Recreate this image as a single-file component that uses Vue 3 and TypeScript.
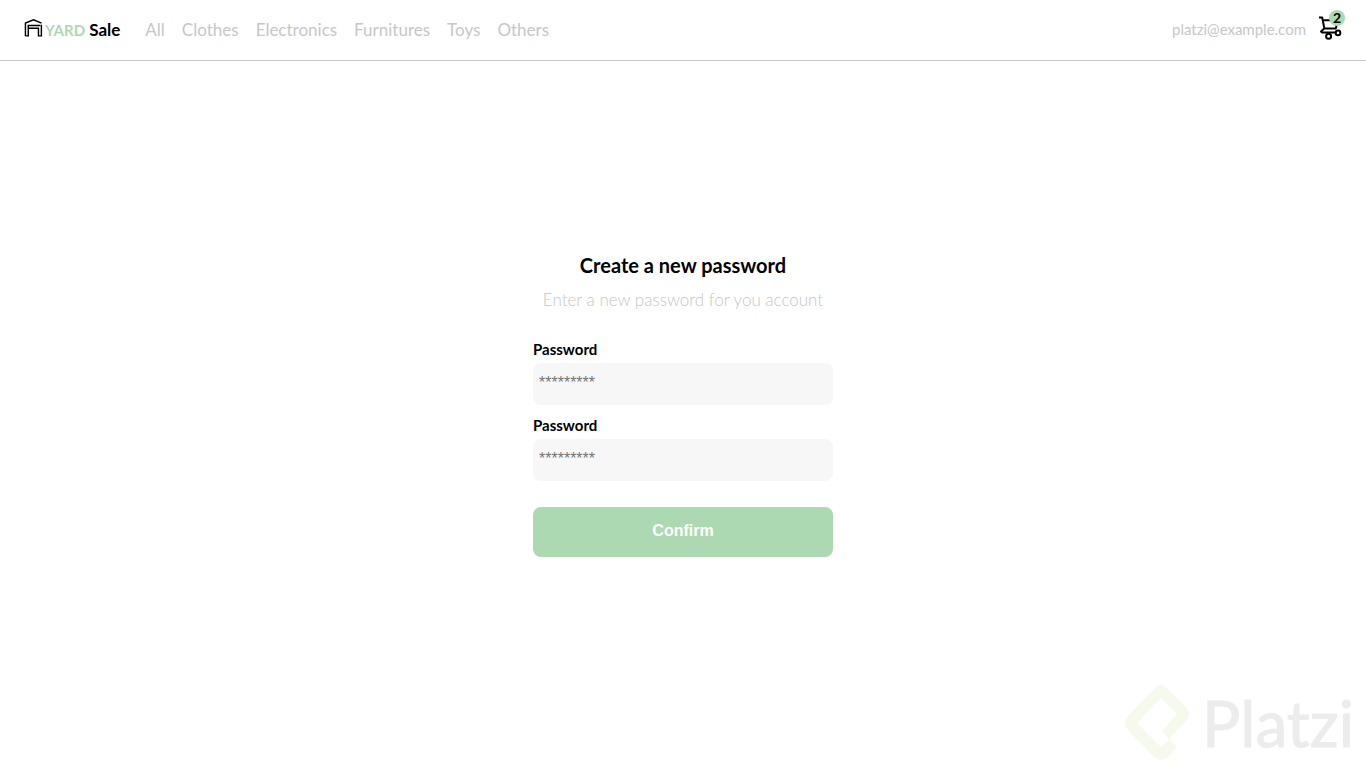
<script setup lang="ts">
import { ref } from 'vue'

const categories: string[] = ['All', 'Clothes', 'Electronics', 'Furnitures', 'Toys', 'Others']
const cartCount = ref<number>(2)
const password = ref<string>('')
const confirmation = ref<string>('')
</script>

<template>
  <div class="page">
    <header class="navbar">
      <a class="brand" href="#" aria-label="Yard Sale">
        <svg class="brand-icon" viewBox="0 0 20 20" aria-hidden="true">
          <path d="M1.5 18.3V4.8L10 1.4l8.5 3.4" />
          <path d="M1.5 18.3h3V7.3h12.8" />
          <path d="M4.5 10.2h10.7v8.1h3.1V6.6" />
        </svg>
        <span class="brand-name"><span class="brand-yard">YARD</span> Sale</span>
      </a>
      <nav class="categories">
        <a v-for="category in categories" :key="category" href="#">{{ category }}</a>
      </nav>
      <a class="email" href="#">platzi@example.com</a>
      <button class="cart" type="button" aria-label="Shopping cart">
        <svg viewBox="0 0 24 26" aria-hidden="true">
          <path d="M1 3.5h3.2L6.4 14.6M5.2 6.2h14.6l-2 8.4H6.2L3 17.6l1.2 1h14" />
          <circle cx="10.6" cy="22.2" r="2.5" />
          <circle cx="20" cy="18.9" r="2.3" />
        </svg>
        <span class="badge">{{ cartCount }}</span>
      </button>
    </header>

    <main class="content">
      <form class="form" @submit.prevent>
        <h1>Create a new password</h1>
        <p class="subtitle">Enter a new password for you account</p>
        <label for="password">Password</label>
        <input id="password" v-model="password" type="password" placeholder="*********" />
        <label for="confirmation">Password</label>
        <input id="confirmation" v-model="confirmation" type="password" placeholder="*********" />
        <button class="confirm" type="submit">Confirm</button>
      </form>
    </main>

    <div class="watermark">
      <svg viewBox="4 4 66 77" aria-hidden="true">
        <path d="M35 8Q41 2 47 8L66 27Q72 34 66 41L49 59L42 51L57 34L41 18L17 43L41 67L49 60L57 67L48 77Q41 83 34 77L8 50Q2 43 8 36Z" />
      </svg>
      <span>Platzi</span>
    </div>
  </div>
</template>

<style>
body {
  margin: 0;
  background: #fff;
}
</style>

<style scoped>
.page {
  display: flex;
  flex-direction: column;
  min-height: 100vh;
  font-family: Lato, "Open Sans", sans-serif;
  color: #000;
}

.page *,
.page {
  box-sizing: border-box;
}

a {
  color: #c7c7c7;
  text-decoration: none;
}

.navbar {
  display: flex;
  align-items: center;
  height: 61px;
  padding: 0 20px 0 24px;
  border-bottom: 1px solid #c7c7c7;
}

.brand {
  display: flex;
  align-items: center;
  gap: 2px;
  color: #000;
}

.brand-icon {
  width: 19px;
  height: 20px;
  margin-bottom: 4px;
  fill: none;
  stroke: #000;
  stroke-width: 1.5;
}

.brand-name {
  font-size: 17px;
  line-height: 20px;
  font-weight: 700;
  white-space: nowrap;
}

.brand-yard {
  color: #acd9b2;
  font-size: 15px;
}

.categories {
  display: flex;
  flex: 1;
  gap: 17px;
  margin-left: 25px;
  font-size: 17px;
  line-height: 20px;
}

.email {
  margin-right: 12px;
  padding-bottom: 2px;
  font-size: 15px;
  line-height: 20px;
}

.cart {
  position: relative;
  width: 28px;
  height: 32px;
  padding: 0;
  border: 0;
  background: none;
  font-family: inherit;
}

.cart svg {
  display: block;
  width: 24px;
  height: 26px;
  margin-bottom: 6px;
  fill: none;
  stroke: #000;
  stroke-width: 2;
  stroke-linejoin: round;
}

.badge {
  position: absolute;
  top: -4px;
  right: 1px;
  width: 16px;
  height: 16px;
  border-radius: 50%;
  background: #acd9b2;
  color: #000;
  font-size: 14px;
  line-height: 16px;
  font-weight: 700;
  text-align: center;
}

.content {
  display: flex;
  flex: 1;
  align-items: center;
  justify-content: center;
  padding-bottom: 20px;
}

.form {
  display: flex;
  flex-direction: column;
  width: 300px;
}

h1 {
  margin: 0 0 12px;
  font-size: 20px;
  line-height: 24px;
  font-weight: 700;
  text-align: center;
}

.subtitle {
  margin: 0 0 30px;
  color: #c7c7c7;
  font-size: 17px;
  line-height: 22px;
  font-weight: 300;
  text-align: center;
  white-space: nowrap;
}

label {
  margin-bottom: 6px;
  font-size: 15px;
  line-height: 16px;
  font-weight: 700;
}

input {
  width: 100%;
  height: 42px;
  margin: 0 0 12px;
  padding: 6px 6px 8px;
  border: 0;
  border-radius: 8px;
  background: #f7f7f7;
  font-family: "Liberation Sans", Arial, sans-serif;
  font-size: 16px;
}

input::placeholder {
  color: #757575;
}

.confirm {
  height: 50px;
  margin-top: 14px;
  padding: 0 0 2px;
  border: 0;
  border-radius: 8px;
  background: #acd9b2;
  color: #fff;
  font-family: "Liberation Sans", Arial, sans-serif;
  font-size: 16px;
  font-weight: 700;
}

.watermark {
  position: fixed;
  right: 12px;
  bottom: 7px;
  display: flex;
  align-items: center;
  gap: 12px;
  color: #ececec;
  font-size: 64px;
  line-height: 77px;
  -webkit-text-stroke: 1px #ececec;
  pointer-events: none;
}

.watermark svg {
  width: 66px;
  height: 77px;
  fill: #f6faec;
}
</style>
